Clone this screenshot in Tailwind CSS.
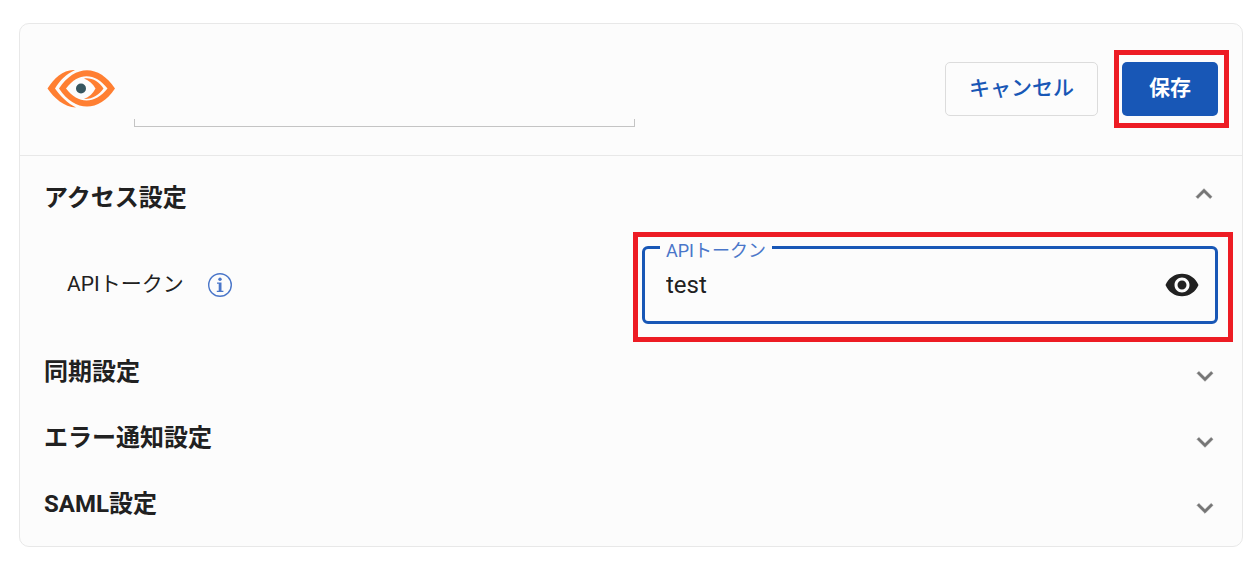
<!DOCTYPE html>
<html lang="ja">
<head>
  <meta charset="UTF-8" />
  <meta name="viewport" content="width=device-width, initial-scale=1.0" />
  <title>アクセス設定</title>
  <script src="https://cdn.jsdelivr.net/npm/@tailwindcss/browser@4"></script>
</head>
<body class="bg-white font-[Roboto,'Noto_Sans_CJK_JP',sans-serif] text-[#212121]">

  <main class="mt-[23px] mr-3 ml-[19px] rounded-[10px] border border-[#e8e8e8] bg-[#fcfcfc]">

    <!-- Header -->
    <header class="flex h-33 items-center border-b border-[#e8e8e8] px-6 pb-0.5">
      <svg class="h-12 w-[72px] shrink-0" viewBox="0 0 72 48" aria-hidden="true">
        <g fill="#ff7f32">
          <path d="M31 5C20 4 10 13 3.500 23.500C10 33 20 42 32 42.500C24 38.500 16 31 11 23.500C16 15 22 9.500 31 5Z" />
          <path fill-rule="evenodd" d="M15 23.500C31-1 55-1 71 23.500C55 47.500 31 47.500 15 23.500ZM22 23.500C34 39.500 51 39.500 63.500 23.500C51 7 34 7 22 23.500Z" />
          <path d="M40 13.500C48 12.500 55 16.500 59.500 23.500C55 30 48 34.500 40 34C45 32 49 28.500 51.500 23.500C49 19 45 15.500 40 13.500Z" />
        </g>
        <circle cx="37" cy="23.500" r="5" fill="#37565f" />
      </svg>

      <div class="ml-[18px] flex h-19 max-w-[501px] flex-1 flex-col">
        <input type="text" aria-label="名前" class="w-full flex-1 bg-transparent text-2xl outline-none" />
        <div class="h-2 border border-t-0 border-[#c4c4c4]"></div>
      </div>

      <div class="ml-auto flex gap-6">
        <button type="button" class="h-[54px] rounded-[5px] border border-[#dcdcdc] px-[23px] text-[21px] font-medium text-[#1857b6]">キャンセル</button>
        <div class="relative">
          <button type="button" class="h-[54px] rounded-[5px] bg-[#1857b6] px-[27px] text-[21px] font-bold text-white">保存</button>
          <div class="pointer-events-none absolute -top-3 -right-[11px] -bottom-3 -left-2 border-5 border-[#ed1c24]"></div>
        </div>
      </div>
    </header>

    <!-- Sections -->
    <div class="px-6 pt-[9px] pb-[9px]">
      <section>
        <h2>
          <button type="button" aria-expanded="true" class="flex h-[66px] w-full items-center justify-between text-2xl font-bold">
            アクセス設定
            <svg class="-mr-0.5 mb-2 size-8 fill-[#757575] stroke-[#757575]" stroke-width="0.400" viewBox="0 0 24 24" aria-hidden="true"><path d="M12 8l-6 6 1.410 1.410L12 10.830l4.590 4.580L18 14z" /></svg>
          </button>
        </h2>
        <div class="grid grid-cols-2 gap-[22px] pt-[15px] pb-[15px]">
          <div class="flex items-center gap-6 pl-[23px]">
            <span class="text-[21px]">APIトークン</span>
            <svg class="size-6" viewBox="0 0 24 24" fill="none" aria-hidden="true">
              <circle cx="12" cy="12" r="11.300" stroke="#4a76c9" stroke-width="1.400" />
              <circle cx="12" cy="6.300" r="1.700" fill="#4a76c9" />
              <path d="M9 9.500h4.500v8.200h1.900v1.300H8.800v-1.300h1.900v-6.900H9z" fill="#4a76c9" />
            </svg>
          </div>
          <div class="relative flex h-[78px] items-center rounded-md border-3 border-[#1857b6]">
            <label for="api-token" class="absolute -top-2 left-[15px] bg-[#fcfcfc] px-1.5 text-lg leading-5 text-[#4a76c9]">APIトークン</label>
            <input id="api-token" type="text" value="test" class="h-full min-w-0 flex-1 bg-transparent pl-[21px] text-2xl outline-none" />
            <button type="button" aria-label="表示" class="mr-[15px]">
              <svg class="size-9 fill-[#212121]" viewBox="0 0 24 24" aria-hidden="true"><path d="M12 4.500C7 4.500 2.730 7.610 1 12c1.730 4.390 6 7.500 11 7.500s9.270-3.110 11-7.500c-1.730-4.390-6-7.500-11-7.500zM12 17c-2.760 0-5-2.240-5-5s2.240-5 5-5 5 2.240 5 5-2.240 5-5 5zm0-8c-1.660 0-3 1.340-3 3s1.340 3 3 3 3-1.340 3-3-1.340-3-3-3z" /></svg>
            </button>
            <div class="pointer-events-none absolute -top-[17px] -right-[18px] -bottom-[21px] -left-3 border-5 border-[#ed1c24]"></div>
          </div>
        </div>
      </section>

      <h2>
        <button type="button" aria-expanded="false" class="flex h-[66px] w-full items-center justify-between text-2xl font-bold">
          同期設定
          <svg class="-mr-[3px] mt-2 size-8 fill-[#757575] stroke-[#757575]" stroke-width="0.400" viewBox="0 0 24 24" aria-hidden="true"><path d="M16.590 8.590L12 13.170 7.410 8.590 6 10l6 6 6-6z" /></svg>
        </button>
      </h2>
      <h2>
        <button type="button" aria-expanded="false" class="flex h-[66px] w-full items-center justify-between text-2xl font-bold">
          エラー通知設定
          <svg class="-mr-[3px] mt-2 size-8 fill-[#757575] stroke-[#757575]" stroke-width="0.400" viewBox="0 0 24 24" aria-hidden="true"><path d="M16.590 8.590L12 13.170 7.410 8.590 6 10l6 6 6-6z" /></svg>
        </button>
      </h2>
      <h2>
        <button type="button" aria-expanded="false" class="flex h-[66px] w-full items-center justify-between text-2xl font-bold">
          SAML設定
          <svg class="-mr-[3px] mt-2 size-8 fill-[#757575] stroke-[#757575]" stroke-width="0.400" viewBox="0 0 24 24" aria-hidden="true"><path d="M16.590 8.590L12 13.170 7.410 8.590 6 10l6 6 6-6z" /></svg>
        </button>
      </h2>
    </div>
  </main>

</body>
</html>
